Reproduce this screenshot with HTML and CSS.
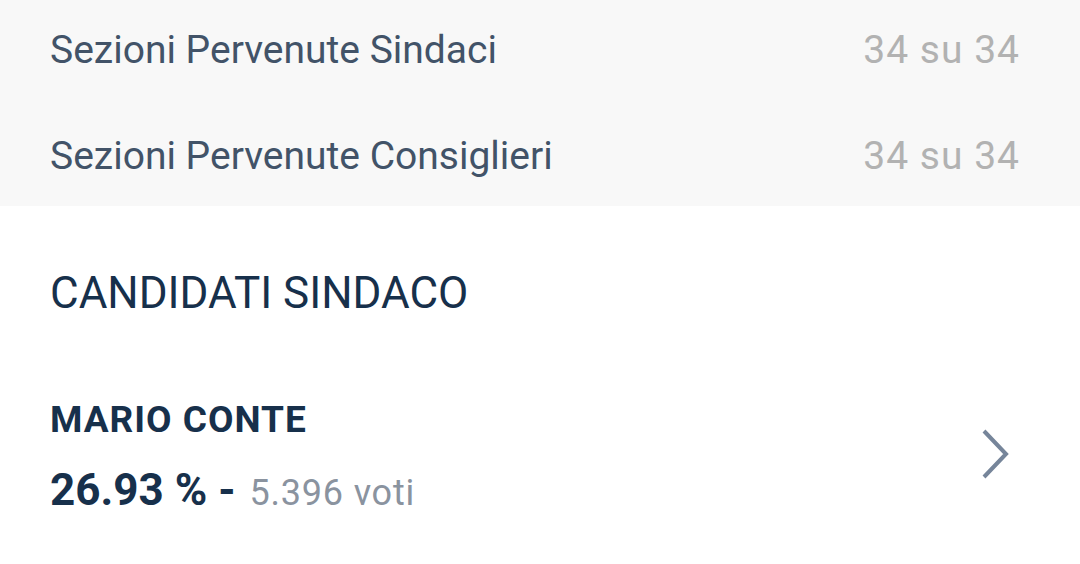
FILE: index.html
```html
<!DOCTYPE html>
<html lang="it">
<head>
<meta charset="utf-8">
<link rel="stylesheet" href="styles.css">
</head>
<body>
<div class="summary">
  <div class="row"><span class="label">Sezioni Pervenute Sindaci</span><span class="value">34 su 34</span></div>
  <div class="row"><span class="label">Sezioni Pervenute Consiglieri</span><span class="value">34 su 34</span></div>
</div>
<div class="section">
  <h2 class="title">CANDIDATI SINDACO</h2>
  <div class="candidate">
    <div class="info">
      <div class="name">MARIO CONTE</div>
      <div class="result"><span class="pct">26.93 % -</span><span class="votes">5.396 voti</span></div>
    </div>
    <svg class="chev" width="30" height="52" viewBox="0 0 30 52"><path d="M4 3 L26 26 L4 49" fill="none" stroke="#76859a" stroke-width="4"/></svg>
  </div>
</div>
</body>
</html>
```
FILE: styles.css
```css
html, body { margin: 0; padding: 0; background: #fff; }
body { width: 1080px; height: 564px; overflow: hidden; font-family: Roboto, "Liberation Sans", sans-serif; }
.summary { background: #f8f8f8; height: 206px; padding: 0 60px 0 50px; box-sizing: border-box; display: flex; flex-direction: column; gap: 6px; }
.row { height: 100px; display: flex; align-items: center; justify-content: space-between; }
.label { font-size: 39px; color: #425368; }
.value { font-size: 39px; color: #b2b2b2; letter-spacing: 1px; }
.section { padding: 0 50px; }
.title { margin: 0; padding-top: 61px; font-size: 44px; font-weight: 400; color: #17304b; line-height: 52px; }
.candidate { display: flex; align-items: center; justify-content: space-between; margin-top: 81px; padding-right: 20px; }
.name { font-size: 37px; font-weight: 700; color: #17304b; line-height: 40px; letter-spacing: 1px; }
.result { margin-top: 26px; line-height: 48px; display: flex; align-items: baseline; }
.pct { font-size: 44px; font-weight: 700; color: #17304b; }
.votes { font-size: 36px; color: #8a939f; margin-left: 14px; letter-spacing: 0.8px; }
.chev { margin-bottom: 10px; }
```
